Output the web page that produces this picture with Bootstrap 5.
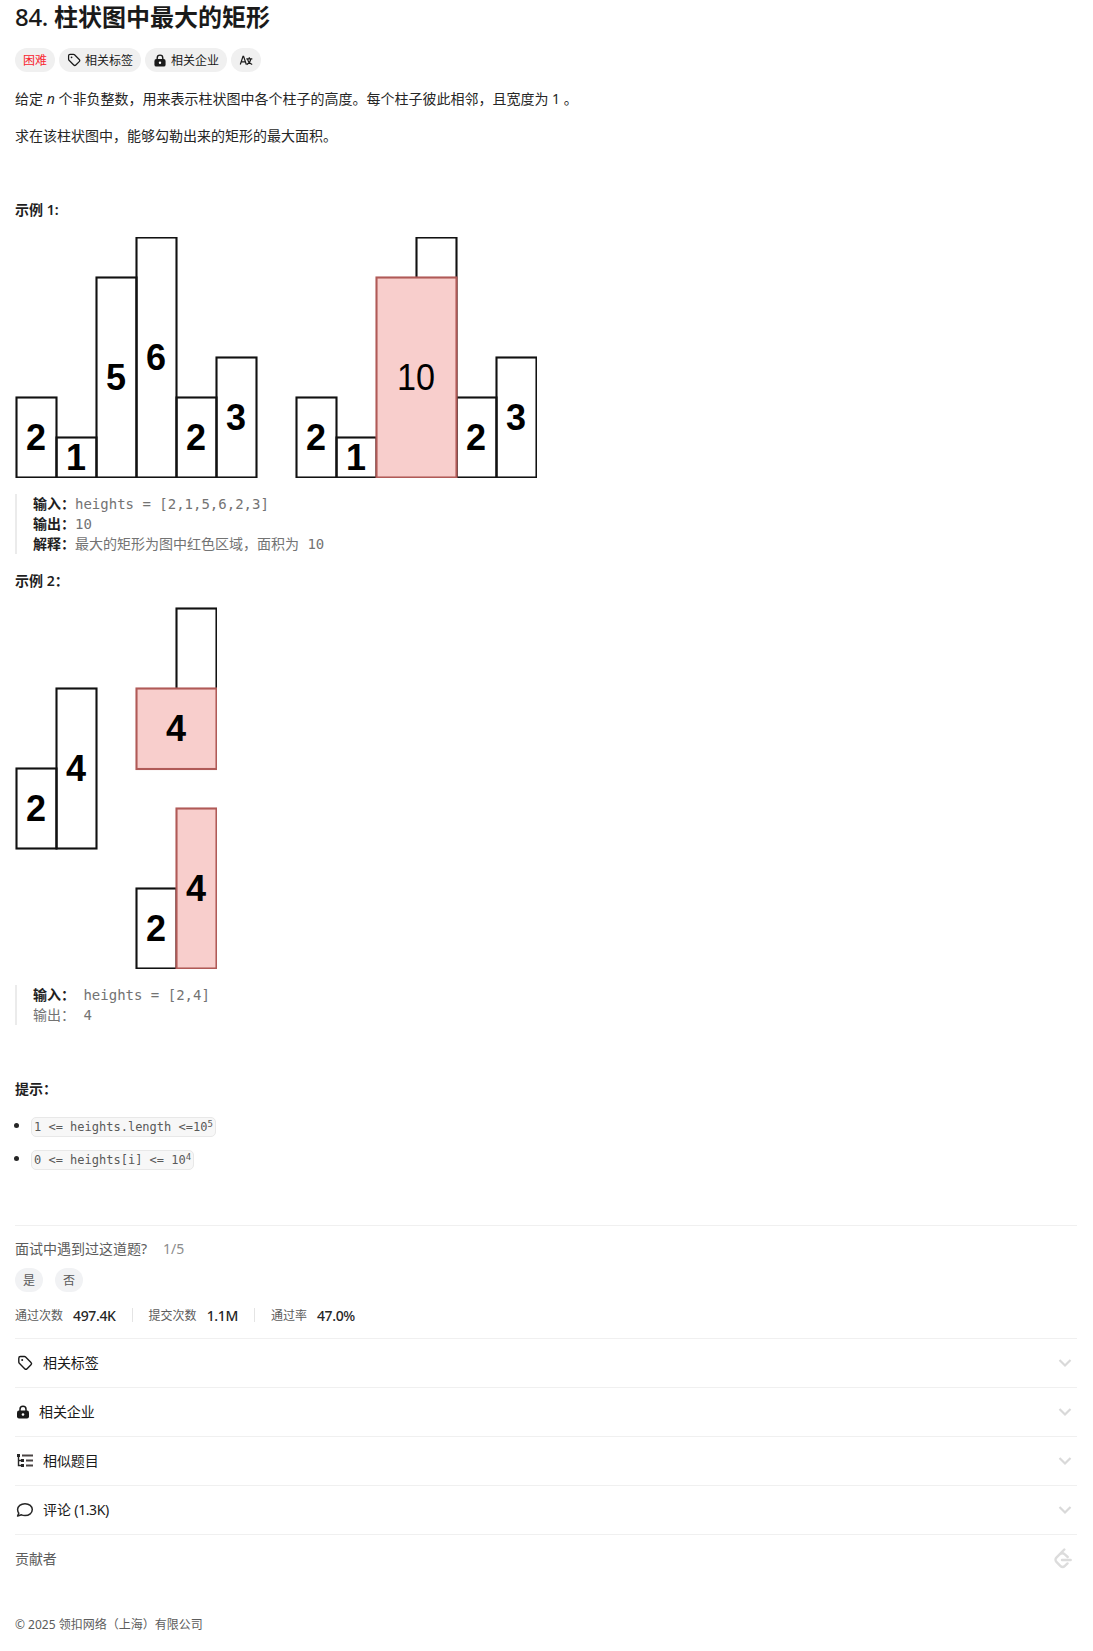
<!DOCTYPE html>
<html lang="zh-CN">
<head>
<meta charset="utf-8">
<meta name="viewport" content="width=device-width, initial-scale=1">
<title>84. 柱状图中最大的矩形</title>
<link href="https://cdn.jsdelivr.net/npm/bootstrap@5.3.0/dist/css/bootstrap.min.css" rel="stylesheet">
<style>
body{font-family:"Noto Sans","Noto Sans CJK SC",sans-serif;font-size:14px;line-height:21px;color:#262626;background:#fff}
.page{padding:0 16px 0 15px;height:1651px;overflow:hidden}
.title{font-size:24px;line-height:34px;font-weight:700;color:#1a1a1a;margin:0 0 14px}
.title .num{font-weight:500;letter-spacing:-.3px}
.chip{height:24px;border-radius:12px;background:#f0f0f0;font-size:12px;line-height:24px;color:#1a1a1a;padding:0 8px}
.chip.hard{color:#f8262f;line-height:26px}
.chip span{padding-top:2px}
.stmt{padding-top:16px}
.stmt p{margin:0 0 16px;height:21px}
.stmt p.cap{margin-bottom:17px}
.stmt b{font-weight:600;color:#1f1f1f}
.fig{display:block;font-family:"Liberation Sans",Arial,sans-serif;font-size:36px;font-weight:700}
.fig rect{fill:none;stroke:#111;stroke-width:2.1}
.fig rect.hit{fill:#f8cecc;stroke:#b05a57}
.fig text{text-anchor:middle;fill:#000}
.io{margin:16px 0;border-left:2px solid #ebebeb;padding-left:16px;font:14px/20px "DejaVu Sans Mono","Noto Sans CJK SC",monospace;color:#737373;overflow:hidden}
.io b{font-family:"Noto Sans CJK SC",sans-serif;font-weight:700;line-height:0}
.io .cjk{font-family:"Noto Sans CJK SC",sans-serif;line-height:0}
.hints{margin:0;padding:1px 0 0;list-style:none}
.hints li{height:21px;margin-bottom:12px;position:relative;padding-left:16px;display:flex;align-items:center}
.hints li::before{content:"";position:absolute;left:-1px;top:7px;width:5px;height:5px;border-radius:50%;background:#262626}
.hints code{display:block;height:20px;border:1px solid #e8e8e8;border-radius:5px;background:#f7f7f7;color:#595959;padding:0 2px;font:12px/18px "DejaVu Sans Mono",monospace;white-space:pre}
.hints sup{font-size:9px;top:-4px;line-height:0;vertical-align:baseline}
.asked{border-top:1px solid #f0f0f0;margin-top:55px;padding-top:12px}
.muted{color:#5c5c5c}
.pill{width:28px;height:24px;border-radius:12px;background:#f1f2f4;font-size:12px;line-height:26px;text-align:center;color:#595959}
.pills{gap:12px;margin-top:9px}
.stat{height:46px;font-size:12px;color:#5c5c5c}
.stat strong{font-size:14px;font-weight:500;color:#262626;margin-left:10px;letter-spacing:-.35px}
.vr-s{width:1px;height:14px;background:#e4e4e4;margin:0 16px}
.item{height:49px;border-top:1px solid #f0f0f0;color:#1a1a1a}
.item span{margin-top:-2px;letter-spacing:-.1px}
.item.last{color:#5c5c5c}
.item svg,.chip svg{flex:none}
.copy{font-size:12px;margin-top:31px}
</style>
<script src="https://cdn.jsdelivr.net/npm/bootstrap@5.3.0/dist/js/bootstrap.bundle.min.js"></script>
</head>
<body>
<svg width="0" height="0" class="position-absolute" aria-hidden="true">
  <symbol id="tag" viewBox="0 0 16 16"><path d="M1.8 3.2v3.9c0 .5.2.9.5 1.2l5.4 5.4c.7.7 1.7.7 2.4 0l3.9-3.9c.7-.7.7-1.700 0-2.400L8.600 2c-.3-.3-.8-.5-1.200-.5H3.500c-.9 0-1.700.7-1.700 1.700z" fill="none" stroke="currentColor" stroke-width="1.4"/><circle cx="5.200" cy="4.900" r="1" fill="currentColor"/></symbol>
  <symbol id="lock" viewBox="0 0 14 14"><path d="M4 6V4.200a3 3 0 0 1 6 0V6" fill="none" stroke="currentColor" stroke-width="1.500"/><rect x="1" y="5.500" width="12" height="8" rx="2" fill="currentColor"/><circle cx="7" cy="9.500" r="1.300" fill="#fff"/></symbol>
  <symbol id="chev" viewBox="0 0 14 10"><path d="M1.500 2l5.500 5.500L12.500 2" fill="none" stroke="#d9d9d9" stroke-width="2.200"/></symbol>
</svg>
<main class="page">
  <h1 class="title"><span class="num">84. </span>柱状图中最大的矩形</h1>
  <div class="d-flex gap-1">
    <div class="chip hard">困难</div>
    <div class="chip d-flex align-items-center"><svg width="14" height="14" class="me-1"><use href="#tag"/></svg><span>相关标签</span></div>
    <div class="chip d-flex align-items-center"><svg width="14" height="13" class="me-1"><use href="#lock"/></svg><span>相关企业</span></div>
    <div class="chip d-flex align-items-center"><svg width="14" height="14" viewBox="0 0 14 14" fill="none" stroke="#1a1a1a" stroke-width="1.200"><path d="M1.300 11.500L4 3.300h.6l2.700 8.200M2.200 8.800h4.200M7.300 5.900h6M10.300 4.300v1.600M7.700 11.600c2.200-1 3.600-2.700 4.100-5.600M8.600 6.200c.5 2.500 2 4.400 4.600 5.300"/></svg></div>
  </div>
  <section class="stmt">
    <p>给定 <em>n</em> 个非负整数，用来表示柱状图中各个柱子的高度。每个柱子彼此相邻，且宽度为 1 。</p>
    <p>求在该柱状图中，能够勾勒出来的矩形的最大面积。</p>
    <p>&nbsp;</p>
    <p class="cap"><b>示例 1:</b></p>
    <svg class="fig" width="522" height="241" viewBox="15 237 522 241">
      <rect x="16.500" y="397.500" width="40" height="80"/><rect x="56.500" y="437.500" width="40" height="40"/><rect x="96.500" y="277.500" width="40" height="200"/><rect x="136.500" y="237.500" width="40" height="240"/><rect x="176.500" y="397.500" width="40" height="80"/><rect x="216.500" y="357.500" width="40" height="120"/>
      <text x="36" y="450">2</text><text x="76" y="470">1</text><text x="116" y="390">5</text><text x="156" y="370">6</text><text x="196" y="450">2</text><text x="236" y="430">3</text>
      <rect x="296.500" y="397.500" width="40" height="80"/><rect x="336.500" y="437.500" width="40" height="40"/><rect x="416.500" y="237.500" width="40" height="240"/><rect x="456.500" y="397.500" width="40" height="80"/><rect x="496.500" y="357.500" width="40" height="120"/>
      <rect class="hit" x="376.500" y="277.500" width="80" height="200"/>
      <text x="316" y="450">2</text><text x="356" y="470">1</text><text x="416" y="390" font-weight="400" textLength="38" lengthAdjust="spacingAndGlyphs">10</text><text x="476" y="450">2</text><text x="516" y="430">3</text>
    </svg>
    <pre class="io"><b>输入：</b>heights = [2,1,5,6,2,3]
<b>输出：</b>10
<b>解释：</b><span class="cjk">最大的矩形为图中红色区域，面积为</span> 10</pre>
    <p><b>示例 2：</b></p>
    <svg class="fig" width="202" height="362" viewBox="15 607 202 362">
      <rect x="16.500" y="768.500" width="40" height="80"/><rect x="56.500" y="688.500" width="40" height="160"/>
      <text x="36" y="821">2</text><text x="76" y="781">4</text>
      <rect x="176.500" y="608.500" width="40" height="160"/><rect class="hit" x="136.500" y="688.500" width="80" height="80.500"/>
      <text x="176" y="741">4</text>
      <rect x="136.500" y="888.500" width="40" height="80"/><rect class="hit" x="176.500" y="808.500" width="40" height="160"/>
      <text x="156" y="941">2</text><text x="196" y="901">4</text>
    </svg>
    <pre class="io"><b>输入：</b> heights = [2,4]
<span class="cjk">输出：</span> 4</pre>
    <p>&nbsp;</p>
    <p><b>提示：</b></p>
    <ul class="hints">
      <li><code>1 &lt;= heights.length &lt;=10<sup>5</sup></code></li>
      <li><code>0 &lt;= heights[i] &lt;= 10<sup>4</sup></code></li>
    </ul>
  </section>
  <section class="asked">
    <div class="d-flex muted"><span>面试中遇到过这道题?</span><span class="ms-3" style="color:#8c8c8c">1/5</span></div>
    <div class="d-flex pills"><div class="pill">是</div><div class="pill">否</div></div>
    <div class="d-flex align-items-center stat">
      <span>通过次数</span><strong>497.4K</strong><i class="vr-s"></i><span>提交次数</span><strong>1.1M</strong><i class="vr-s"></i><span>通过率</span><strong>47.0%</strong>
    </div>
  </section>
  <section>
    <div class="item d-flex align-items-center"><svg width="20" height="16"><use href="#tag"/></svg><span class="ms-2">相关标签</span><svg class="ms-auto me-1" width="16" height="10"><use href="#chev"/></svg></div>
    <div class="item d-flex align-items-center"><svg width="16" height="14"><use href="#lock"/></svg><span class="ms-2">相关企业</span><svg class="ms-auto me-1" width="16" height="10"><use href="#chev"/></svg></div>
    <div class="item d-flex align-items-center"><svg width="20" height="16" viewBox="0 0 20 16"><path d="M3.500 2v10.500H8M3.500 7.500H8" fill="none" stroke="#262626" stroke-width="1.400"/><path d="M2 1h3v3H2zM6 6h3v3H6zM6 11h3v3H6z" fill="#262626"/><path d="M7 2.500h11M11 7.500h7M11 12.500h7" stroke="#4a4444" stroke-width="2"/></svg><span class="ms-2">相似题目</span><svg class="ms-auto me-1" width="16" height="10"><use href="#chev"/></svg></div>
    <div class="item d-flex align-items-center"><svg width="20" height="16" viewBox="0 0 20 16"><path d="M10 1.700c4.200 0 7.300 2.500 7.300 5.900s-3.100 5.900-7.300 5.900c-1.300 0-2.500-.2-3.500-.7L2.600 14l1.200-2.900c-.8-1-1.200-2.200-1.200-3.500 0-3.400 3.200-5.900 7.400-5.900z" fill="none" stroke="#262626" stroke-width="1.500" stroke-linejoin="round"/></svg><span class="ms-2">评论 <span style="letter-spacing:-.4px">(1.3K)</span></span><svg class="ms-auto me-1" width="16" height="10"><use href="#chev"/></svg></div>
    <div class="item last d-flex align-items-center"><span>贡献者</span><svg class="ms-auto" style="margin:-2px 5px 0 0" width="18" height="21" viewBox="0 0 18 21" fill="none" stroke="#dcdcdc" stroke-width="2.400" stroke-linecap="round"><path d="M10.300 1.500L2.400 9.600c-1.200 1.200-1.200 3 0 4.200l3.900 4c1.300 1.300 3.300 1.300 4.600 0l2.600-2.400M5.700 6.400c1.600-1.300 3.600-1.300 5.100 0L13.700 9M8 12h8.700"/></svg></div>
  </section>
  <footer class="muted copy">© 2025 领扣网络（上海）有限公司</footer>
</main>
</body>
</html>
